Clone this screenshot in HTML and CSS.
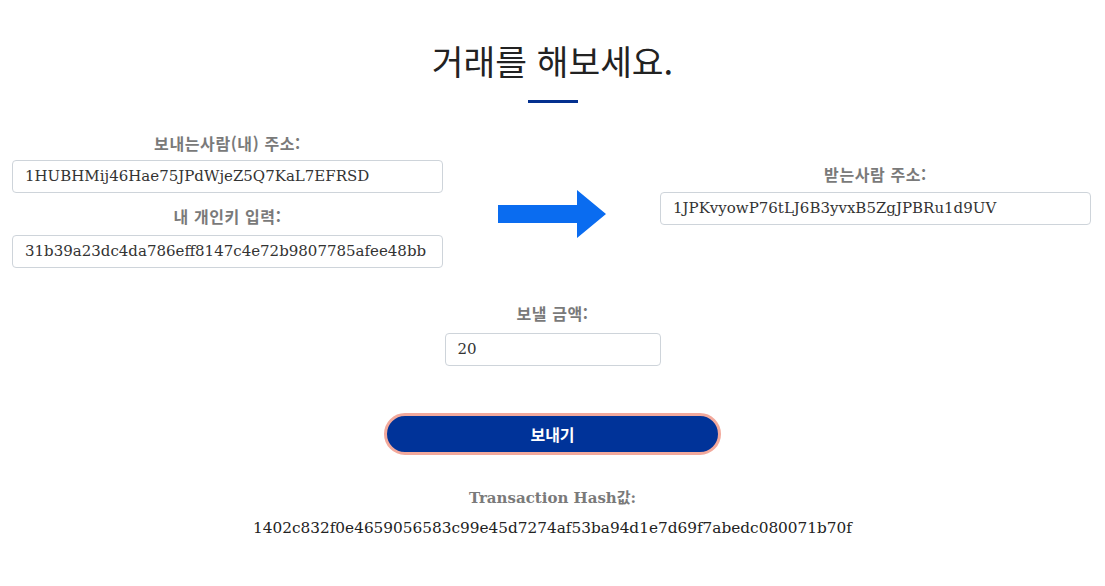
FILE: index.html
```html
<!DOCTYPE html>
<html lang="ko">
<head>
<meta charset="utf-8">
<title>거래를 해보세요.</title>
<link rel="stylesheet" href="styles.css">
</head>
<body>
<main class="page">
  <h2 class="title">거래를 해보세요.</h2>
  <div class="title-bar"></div>

  <section class="transfer">
    <div class="col col-left">
      <label class="label">보내는사람(내) 주소:</label>
      <div class="input">1HUBHMij46Hae75JPdWjeZ5Q7KaL7EFRSD</div>
      <label class="label label-second">내 개인키 입력:</label>
      <div class="input input-second">31b39a23dc4da786eff8147c4e72b9807785afee48bb</div>
    </div>
    <div class="arrow-wrap">
      <svg class="arrow" width="108" height="48" viewBox="0 0 108 48">
        <path d="M0 15 H79 V0 L108 24 L79 48 V33 H0 Z" fill="#0a6cf0"/>
      </svg>
    </div>
    <div class="col col-right">
      <label class="label">받는사람 주소:</label>
      <div class="input input-right">1JPKvyowP76tLJ6B3yvxB5ZgJPBRu1d9UV</div>
    </div>
  </section>

  <section class="amount">
    <label class="label">보낼 금액:</label>
    <div class="input input-amount">20</div>
  </section>

  <button class="send">보내기</button>

  <section class="result">
    <div class="hash-label">Transaction Hash값:</div>
    <div class="hash">1402c832f0e4659056583c99e45d7274af53ba94d1e7d69f7abedc080071b70f</div>
  </section>
</main>
</body>
</html>
```

FILE: styles.css
```css
* { box-sizing: border-box; }

html, body {
  margin: 0;
  padding: 0;
  background: #ffffff;
}

body {
  font-family: "DejaVu Serif", "Noto Sans CJK KR", serif;
  color: #222;
}

.page {
  display: flex;
  flex-direction: column;
  align-items: center;
  width: 1105px;
}

.title {
  margin: 40px 0 0;
  height: 40px;
  line-height: 40px;
  font-family: "Noto Sans CJK KR", "Noto Sans", sans-serif;
  font-weight: 400;
  font-size: 34.5px;
  color: #222;
}

.title-bar {
  margin-top: 20px;
  width: 50px;
  height: 3px;
  background: #03308f;
}

.transfer {
  display: flex;
  justify-content: space-between;
  align-items: flex-start;
  width: 100%;
  padding: 29px 14px 0 12px;
}

.col {
  display: flex;
  flex-direction: column;
  align-items: center;
  width: 431px;
}

.col-right {
  margin-top: 31px;
}

.label {
  display: block;
  height: 22px;
  line-height: 22px;
  font-family: "Noto Sans CJK KR", "Noto Sans", sans-serif;
  font-weight: 700;
  font-size: 16px;
  letter-spacing: 0.6px;
  color: #7a7a7a;
  text-align: center;
}

.label-second {
  margin-top: 12px;
}

.input {
  width: 431px;
  height: 33px;
  margin-top: 6px;
  padding: 0 12px;
  border: 1px solid #ced4da;
  border-radius: 4px;
  background: #fff;
  font-family: "DejaVu Serif", serif;
  font-size: 15px;
  line-height: 31px;
  color: #333;
  white-space: nowrap;
  overflow: hidden;
}

.input-second {
  margin-top: 8px;
}

.input-right {
  margin-top: 7px;
}

.arrow-wrap {
  flex: 1;
  display: flex;
  justify-content: center;
  padding-top: 58px;
}

.arrow {
  display: block;
}

.amount {
  display: flex;
  flex-direction: column;
  align-items: center;
  margin-top: 34px;
}

.input-amount {
  width: 216px;
  margin-top: 9px;
}

.send {
  margin-top: 47px;
  width: 337px;
  height: 42px;
  border: 3px solid #f2a99c;
  border-radius: 21px;
  background: #003399;
  color: #fff;
  font-family: "Noto Sans CJK KR", "Noto Sans", sans-serif;
  font-weight: 700;
  font-size: 16px;
  cursor: pointer;
}

.result {
  display: flex;
  flex-direction: column;
  align-items: center;
  margin-top: 32px;
}

.hash-label {
  height: 22px;
  line-height: 22px;
  font-family: "DejaVu Serif", "Noto Sans CJK KR", serif;
  font-weight: 700;
  font-size: 15px;
  color: #7a7a7a;
}

.hash {
  margin-top: 8px;
  height: 22px;
  line-height: 22px;
  font-size: 15.3px;
  color: #222;
}
```
